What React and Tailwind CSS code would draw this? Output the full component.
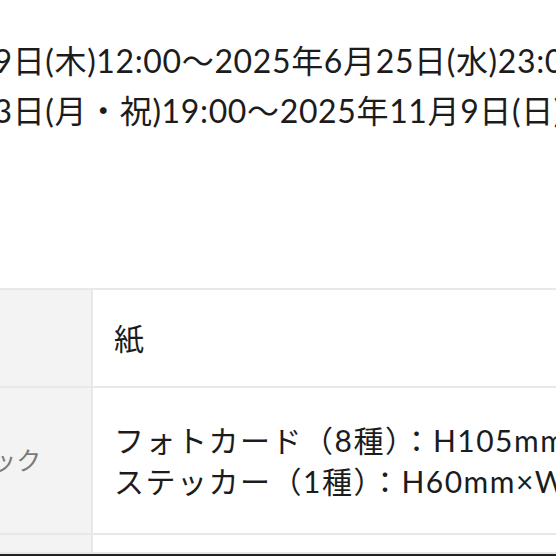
export default function App() {
  const rows = [
    { label: "素材", lines: ["紙"], h: "h-[98px]" },
    {
      label: "スペック",
      lines: ["フォトカード（8種）：H105mm×W70mm", "ステッカー（1種）：H60mm×W60mm"],
      h: "h-[147px]",
    },
    { label: "価格", lines: [""], h: "h-[19px]" },
  ];

  return (
    <div className="w-[556px] h-[556px] overflow-hidden bg-white relative font-['Lato','Noto_Sans_CJK_JP',sans-serif] text-[#1c1c1c]">
      {/* dates */}
      <div className="pt-[36px] -ml-[187px] whitespace-nowrap text-[32px] leading-[50px] tracking-[0.02em]">
        <p>2025年6月19日(木)12:00～2025年6月25日(水)23:00</p>
        <p>2025年11月3日(月・祝)19:00～2025年11月9日(日)23:59</p>
      </div>

      {/* spec table */}
      <div className="mt-[152px] -ml-[68px] w-[760px] border-t-2 border-[#e8e8e8]">
        {rows.map((row, i) => (
          <div key={i} className={"flex border-b-2 border-[#e8e8e8] " + row.h}>
            <div className="w-[161px] shrink-0 bg-[#f3f3f3] border-r-2 border-[#e8e8e8] flex items-center pl-[11px] text-[25px] text-[#7a7a7a]">
              {row.label}
            </div>
            <div className="flex-1 flex flex-col justify-center pl-[21px] text-[30px] leading-[41px] tracking-[0.05em] whitespace-nowrap">
              {row.lines.map((l, j) => (
                <p key={j}>{l}</p>
              ))}
            </div>
          </div>
        ))}
      </div>

      <div className="absolute left-0 bottom-0 w-full h-[2px] bg-[#222]" />
    </div>
  );
}
